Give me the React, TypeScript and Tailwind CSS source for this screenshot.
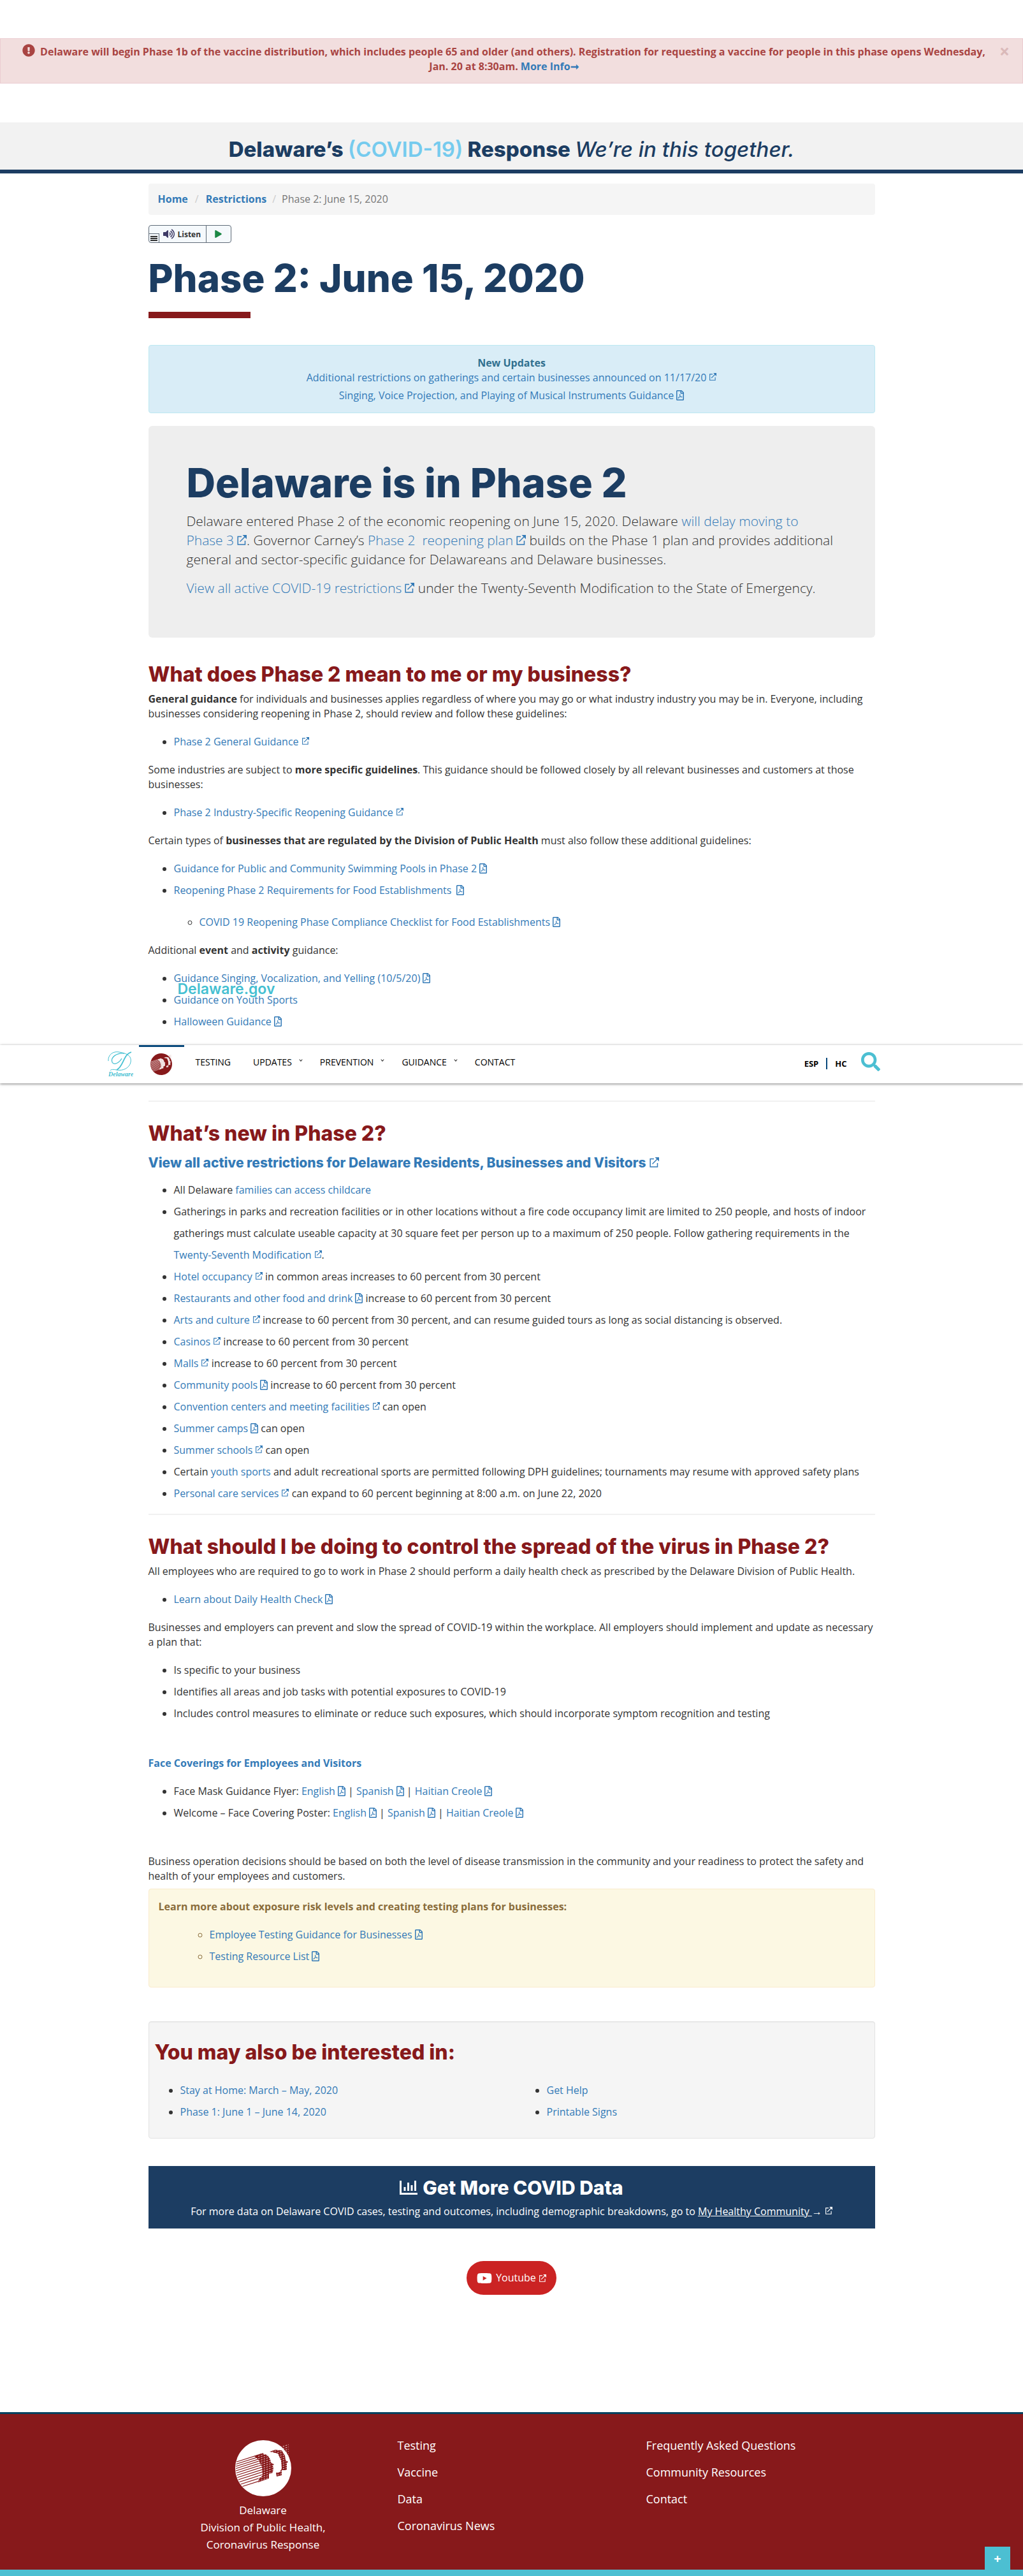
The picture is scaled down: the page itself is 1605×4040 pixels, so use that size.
import type { ReactNode } from "react";
import { FaExclamationCircle, FaRegFilePdf, FaYoutube, FaVolumeUp, FaSearch, FaPlay } from "react-icons/fa";

const display = "font-[Inter,sans-serif]";

function Ext({ className = "size-3 align-[1px]" }: { className?: string }) {
  return (
    <svg viewBox="0 0 16 16" className={`${className} ml-1 inline-block`} fill="none" stroke="currentColor" strokeWidth="1.5" aria-hidden="true">
      <path d="M8 2.5H2.2V15H13.5V9" />
      <path d="M5.500 10.500 14 2" />
      <path d="M9.500 0H16V6.500Z" fill="currentColor" stroke="none" />
    </svg>
  );
}

function Pdf() {
  return <FaRegFilePdf className="ml-1 inline-block h-4 w-3 align-[-2px]" aria-hidden="true" />;
}

function A({ children, icon }: { children: ReactNode; icon?: "ext" | "pdf" | "extlg" }) {
  return (
    <a href="#" className="text-[#337ab7]">
      {children}
      {icon === "ext" && <Ext />}
      {icon === "extlg" && <Ext className="size-4 align-baseline" />}
      {icon === "pdf" && <Pdf />}
    </a>
  );
}

function H2({ children }: { children: ReactNode }) {
  return <h2 className={`${display} text-[32px] leading-9 font-extrabold text-[#87191b]`}>{children}</h2>;
}

const stripes = Array.from({ length: 12 }, (_, i) => {
  const y = 34 + i * 3.5;
  const x = 45 - Math.sqrt(44 * 44 - (44 - y) * (44 - y));
  return `M${x} ${y}L44 ${y - 0.32 * (44 - x)}`;
}).join("");

const hatching = Array.from({ length: 13 }, (_, i) => `M36 ${22 + i * 3.5}L84 ${7 + i * 3.5}`).join("");

function Seal({ className, face, ground }: { className: string; face: string; ground: string }) {
  return (
    <svg viewBox="0 0 88 88" className={className} aria-hidden="true">
      <circle cx="44" cy="44" r="44" fill={ground} />
      <path d={stripes} stroke={face} strokeWidth="1.3" />
      <path d="M46 60 60 44 62 70 36 74Z" fill={ground} />
      <path d="M30 25 41 21 47 22 51 24 55 30 56 35 61 38 59 40 60 43 59 51 53 53 53 60 36 66 36 63 43 55 42 42 36 30Z" fill={face} />
      <path d="M54 18 63 15 73 16 78 24 79 31 83 34 81 36 81 47 73 47 73 55 65 57 64 51 70 50 73 44 72 32 67 21Z" fill={face} />
      <path d={hatching} stroke={ground} strokeWidth="0.8" strokeDasharray="2.5 2" />
    </svg>
  );
}

const body = "mx-auto w-full max-w-[1170px] px-[15px]";
const list = "mt-[15px] list-disc pl-10 leading-[34px]";

export default function App() {
  return (
    <div className="w-full bg-white pt-[60px] font-['Open_Sans',sans-serif] text-[16px] leading-[23px] text-[#333]">
      <div role="alert" className="flex items-start border border-[#ebccd1] bg-[#f2dede] px-5 pt-2 pb-[14px] font-bold text-[#a94442]">
        <p className="flex-1 text-center">
          <FaExclamationCircle className="mr-2 inline-block size-5 align-[-2px]" />
          Delaware will begin Phase 1b of the vaccine distribution, which includes people 65 and older (and others). Registration for requesting a vaccine for people in this phase opens Wednesday, Jan. 20 at 8:30am.{" "}
          <a href="#" className="text-[#337ab7]">More Info<span aria-hidden="true">➞</span></a>
        </p>
        <button type="button" aria-label="Close" className="w-6 text-right text-[28px] leading-[23px] text-[#dab9b9]">×</button>
      </div>

      <header className={`${display} mt-[61px] h-[80px] border-b-[6px] border-[#1c3d62] bg-[#f2f2f2] pt-[22px] text-center text-[33px] leading-10 font-extrabold text-[#1c3d62]`}>
        Delaware’s <span className="font-semibold text-[#76cbee]">(COVID-19)</span> Response <em className="font-medium">We’re in this together.</em>
      </header>

      <main>
        <div className={body}>
          <nav aria-label="Breadcrumb" className="mt-4 flex h-[49px] items-center rounded bg-[#f5f5f5] px-[15px]">
            <a href="#" className="font-bold text-[#337ab7]">Home</a>
            <span className="px-[11px] text-[#ccc]">/</span>
            <a href="#" className="font-bold text-[#337ab7]">Restrictions</a>
            <span className="px-[9px] text-[#ccc]">/</span>
            <span className="text-[#777]">Phase 2: June 15, 2020</span>
          </nav>

          <div className="mt-4 flex h-7 w-[130px] rounded-sm border border-[#5f6b78] bg-[#f5f9fc] text-[#333]">
            <span className="flex w-4 items-end">
              <span className="flex h-[14px] w-4 flex-col justify-center gap-px border-t border-r border-[#5f6b78] px-0.5">
                <i className="h-0.5 bg-[#333]" /><i className="h-0.5 bg-[#333]" /><i className="h-0.5 bg-[#333]" />
              </span>
            </span>
            <button type="button" className="flex flex-1 items-center gap-[5px] pl-1.5 text-[12px] font-bold">
              <FaVolumeUp className="size-[18px] text-[#3d3a66]" />Listen
            </button>
            <button type="button" aria-label="Play" className="flex w-[39px] items-center justify-center border-l border-[#5f6b78]">
              <FaPlay className="h-3 w-[11px] text-[#1c8845]" />
            </button>
          </div>

          <h1 className={`${display} mt-5 text-[60px] leading-[70px] font-extrabold text-[#1c3d62]`}>Phase 2: June 15, 2020</h1>
          <div className="mt-[18px] h-[10px] w-40 bg-[#87191b]" />

          <div className="mt-[42px] rounded border border-[#bce8f1] bg-[#d9edf7] pt-4 pb-[10px] text-center">
            <p className="font-bold text-[#31708f]">New Updates</p>
            <p><A icon="ext">Additional restrictions on gatherings and certain businesses announced on 11/17/20</A></p>
            <p className="py-[5px]"><A icon="pdf">Singing, Voice Projection, and Playing of Musical Instruments Guidance</A></p>
          </div>

          <section className="mt-5 rounded-md bg-[#eee] px-[60px] pt-[54px] pb-[63px] text-[21px] leading-[30px] font-light">
            <h2 className={`${display} text-[63px] leading-[70px] font-extrabold text-[#1c3d62]`}>Delaware is in Phase 2</h2>
            <p className="mt-[10px]">
              Delaware entered Phase 2 of the economic reopening on June 15, 2020. Delaware <A icon="extlg">will delay moving to Phase 3</A>. Governor Carney’s <A icon="extlg">Phase 2&nbsp; reopening plan</A> builds on the Phase 1 plan and provides additional general and sector-specific guidance for Delawareans and Delaware businesses.
            </p>
            <p className="mt-[15px]"><A icon="extlg">View all active COVID-19 restrictions</A> under the Twenty-Seventh Modification to the State of Emergency.</p>
          </section>

          <section className="mt-10">
            <H2>What does Phase 2 mean to me or my business?</H2>
            <p className="mt-[9px]"><b>General guidance</b> for individuals and businesses applies regardless of where you may go or what industry industry you may be in. Everyone, including businesses considering reopening in Phase 2, should review and follow these guidelines:</p>
            <ul className={list}><li><A icon="ext">Phase 2 General Guidance</A></li></ul>
            <p className="mt-4">Some industries are subject to <b>more specific guidelines</b>. This guidance should be followed closely by all relevant businesses and customers at those businesses:</p>
            <ul className={list}><li><A icon="ext">Phase 2 Industry-Specific Reopening Guidance</A></li></ul>
            <p className="mt-4">Certain types of <b>businesses that are regulated by the Division of Public Health</b> must also follow these additional guidelines:</p>
            <ul className={list}>
              <li><A icon="pdf">Guidance for Public and Community Swimming Pools in Phase 2</A></li>
              <li>
                <A icon="pdf">Reopening Phase 2 Requirements for Food Establishments&nbsp;</A>
                <ul className="mt-4 list-[circle] pl-10"><li><A icon="pdf">COVID 19 Reopening Phase Compliance Checklist for Food Establishments</A></li></ul>
              </li>
            </ul>
            <p className="mt-4">Additional <b>event</b> and <b>activity</b> guidance:</p>
            <div className="relative">
              <ul className={list}>
                <li><A icon="pdf">Guidance Singing, Vocalization, and Yelling (10/5/20)</A></li>
                <li><A>Guidance on Youth Sports</A></li>
                <li><A icon="pdf">Halloween Guidance</A></li>
              </ul>
              <a href="#" className={`${display} absolute top-5 left-[46px] text-[23px] leading-7 font-semibold text-[#45c0d2]`}>Delaware.gov</a>
            </div>
          </section>
        </div>

        <nav aria-label="Main" className="mt-5 h-[60px] bg-white text-black shadow-[0_1px_4px_rgba(0,0,0,0.5)]">
          <div className="mx-auto flex h-full max-w-[1270px]">
            <a href="#" aria-label="State of Delaware" className="mt-2 block w-[50px] pl-px text-[#45c0d2]">
              <svg viewBox="0 0 40 46" className="h-[46px] w-10" fill="none" stroke="currentColor" aria-hidden="true">
                <path d="M1 17C0 7 9 1 18 3 29 5 38 8 36 19 34 28 24 33 14 31 9 30 5 30 4 32" strokeWidth="1" />
                <path d="M26 5C14 4 4 11 7 19 10 24 18 20 22 13" strokeWidth="1.3" />
                <path d="M37 3C24 7 25 26 14 31" strokeWidth="1.8" />
                <text x="1" y="41" fontFamily="Liberation Serif, serif" fontSize="10" fontStyle="italic" fontWeight="bold" fill="currentColor" stroke="none">Delaware</text>
              </svg>
            </a>
            <a href="#" aria-label="Home" className="flex w-[71px] justify-center border-t-[3px] border-[#09497c] pt-2.5">
              <Seal className="size-[34px]" ground="#87191b" face="#fff" />
            </a>
            <ul className="flex gap-x-[27px] pt-4 pl-[18px] text-[14px] leading-[22px]">
              <li className="mr-2"><a href="#">TESTING</a></li>
              {["UPDATES", "PREVENTION", "GUIDANCE"].map((t) => (
                <li key={t}>
                  <a href="#" className="flex gap-[11px]">{t}<svg viewBox="0 0 8 5" className="mt-1.5 h-1 w-1.5" fill="none" stroke="#333" strokeWidth="1.4" aria-hidden="true"><path d="M1 .5 4 4 7 .5" /></svg></a>
                </li>
              ))}
              <li><a href="#">CONTACT</a></li>
            </ul>
            <div className="mr-[57px] ml-auto flex gap-3 pt-5 text-[13px] leading-[18px] font-bold">
              <a href="#">ESP</a>
              <span className="h-[18px] w-0.5 bg-[#09497c]" />
              <a href="#">HC</a>
              <button type="button" aria-label="Search" className="-mt-2.5 ml-2.5 h-[31px]"><FaSearch className="size-[30px] text-[#4cbfd2]" /></button>
            </div>
          </div>
        </nav>

        <div className={body}>
          <section className="mt-[27px] border-t-2 border-[#f1f1f1] pt-8">
            <H2>What’s new in Phase 2?</H2>
            <h3 className={`${display} mt-4 text-[21px] leading-6 font-extrabold`}><A icon="extlg">View all active restrictions for Delaware Residents, Businesses and Visitors</A></h3>
            <ul className="mt-[13px] list-disc pl-10 leading-[34px]">
              <li>All Delaware <A>families can access childcare</A></li>
              <li>Gatherings in parks and recreation facilities or in other locations without a fire code occupancy limit are limited to 250 people, and hosts of indoor gatherings must calculate useable capacity at 30 square feet per person up to a maximum of 250 people. Follow gathering requirements in the <A icon="ext">Twenty-Seventh Modification</A>.</li>
              <li><A icon="ext">Hotel occupancy</A> in common areas increases to 60 percent from 30 percent</li>
              <li><A icon="pdf">Restaurants and other food and drink</A> increase to 60 percent from 30 percent</li>
              <li><A icon="ext">Arts and culture</A> increase to 60 percent from 30 percent, and can resume guided tours as long as social distancing is observed.</li>
              <li><A icon="ext">Casinos</A> increase to 60 percent from 30 percent</li>
              <li><A icon="ext">Malls</A> increase to 60 percent from 30 percent</li>
              <li><A icon="pdf">Community pools</A> increase to 60 percent from 30 percent</li>
              <li><A icon="ext">Convention centers and meeting facilities</A> can open</li>
              <li><A icon="pdf">Summer camps</A> can open</li>
              <li><A icon="ext">Summer schools</A> can open</li>
              <li>Certain <A>youth sports</A> and adult recreational sports are permitted following DPH guidelines; tournaments may resume with approved safety plans</li>
              <li><A icon="ext">Personal care services</A> can expand to 60 percent beginning at 8:00 a.m. on June 22, 2020</li>
            </ul>
          </section>

          <section className="mt-[15px] border-t-2 border-[#f1f1f1] pt-8">
            <H2>What should I be doing to control the spread of the virus in Phase 2?</H2>
            <p className="mt-[9px]">All employees who are required to go to work in Phase 2 should perform a daily health check as prescribed by the Delaware Division of Public Health.</p>
            <ul className={list}><li><A icon="pdf">Learn about Daily Health Check</A></li></ul>
            <p className="mt-4">Businesses and employers can prevent and slow the spread of COVID-19 within the workplace. All employers should implement and update as necessary a plan that:</p>
            <ul className={list}>
              <li>Is specific to your business</li>
              <li>Identifies all areas and job tasks with potential exposures to COVID-19</li>
              <li>Includes control measures to eliminate or reduce such exposures, which should incorporate symptom recognition and testing</li>
            </ul>
            <p className="mt-[50px] font-bold"><A>Face Coverings for Employees and Visitors</A></p>
            <ul className={list}>
              <li>Face Mask Guidance Flyer: <A icon="pdf">English</A> | <A icon="pdf">Spanish</A> | <A icon="pdf">Haitian Creole</A></li>
              <li>Welcome – Face Covering Poster: <A icon="pdf">English</A> | <A icon="pdf">Spanish</A> | <A icon="pdf">Haitian Creole</A></li>
            </ul>
            <p className="mt-12">Business operation decisions should be based on both the level of disease transmission in the community and your readiness to protect the safety and health of your employees and customers.</p>
            <div className="mt-2 rounded border border-[#faebcc] bg-[#fcf8e3] px-[15px] pt-4 pb-[31px] text-[#8a6d3b]">
              <p className="font-bold">Learn more about exposure risk levels and creating testing plans for businesses:</p>
              <ul className="mt-[15px] list-[circle] pl-20 leading-[34px]">
                <li><A icon="pdf">Employee Testing Guidance for Businesses</A></li>
                <li><A icon="pdf">Testing Resource List</A></li>
              </ul>
            </div>
          </section>

          <section className="mt-[53px] rounded border border-[#e3e3e3] bg-[#f5f5f5] px-[9px] pt-[30px] pb-6 shadow-[inset_0_1px_1px_rgba(0,0,0,0.05)]">
            <H2>You may also be interested in:</H2>
            <div className="mt-6 grid grid-cols-2 gap-x-[30px] leading-[34px]">
              <ul className="list-disc pl-10"><li><A>Stay at Home: March – May, 2020</A></li><li><A>Phase 1: June 1 – June 14, 2020</A></li></ul>
              <ul className="list-disc pl-10"><li><A>Get Help</A></li><li><A>Printable Signs</A></li></ul>
            </div>
          </section>

          <section className="mt-[43px] bg-[#1c3d62] pt-4 pb-[15px] text-center text-white">
            <h2 className={`${display} flex items-center justify-center gap-2 text-[30px] leading-9 font-extrabold`}>
              <svg viewBox="0 0 28 22" className="h-[22px] w-7" fill="none" stroke="currentColor" strokeWidth="3" aria-hidden="true"><path d="M1.5 0V20.5H28" /><path d="M8 16V10M13.5 16V3M19 16V7M24.5 16V0" /></svg>
              Get More COVID Data
            </h2>
            <p className="pt-2">For more data on Delaware COVID cases, testing and outcomes, including demographic breakdowns, go to <a href="#"><span className="underline">My Healthy Community </span>→<Ext /></a></p>
          </section>

          <div className="mt-[51px] text-center">
            <a href="#" className="inline-flex h-[53px] items-center rounded-full bg-[#cb2323] px-4 text-white">
              <FaYoutube className="mr-1.5 size-6" />Youtube<Ext />
            </a>
          </div>
        </div>
      </main>

      <footer className="mt-[184px] border-t-[3px] border-b-[10px] border-t-[#06415e] border-b-[#4cbfd2] bg-[#87191b] text-[17px] font-medium text-white">
        <div className="relative">
          <div className="mx-auto grid max-w-[1170px] grid-cols-3 pt-[28px] pb-[26px]">
            <div className="flex flex-col items-center pt-[13px] leading-[27px]">
              <Seal className="mb-2 size-[88px]" ground="#fff" face="#87191b" />
              <p className="text-center text-[17px]">Delaware<br />Division of Public Health,<br />Coronavirus Response</p>
            </div>
            <ul className="flex flex-col pl-4 text-[18px] leading-[42px]">
              {["Testing", "Vaccine", "Data", "Coronavirus News"].map((t) => <li key={t}><a href="#">{t}</a></li>)}
            </ul>
            <ul className="flex flex-col pl-4 text-[18px] leading-[42px]">
              {["Frequently Asked Questions", "Community Resources", "Contact"].map((t) => <li key={t}><a href="#">{t}</a></li>)}
            </ul>
          </div>
          <button type="button" aria-label="Open panel" className="absolute right-5 bottom-0 h-9 w-10 bg-[#4cbfd2] text-[20px] font-bold">+</button>
        </div>
      </footer>
    </div>
  );
}
